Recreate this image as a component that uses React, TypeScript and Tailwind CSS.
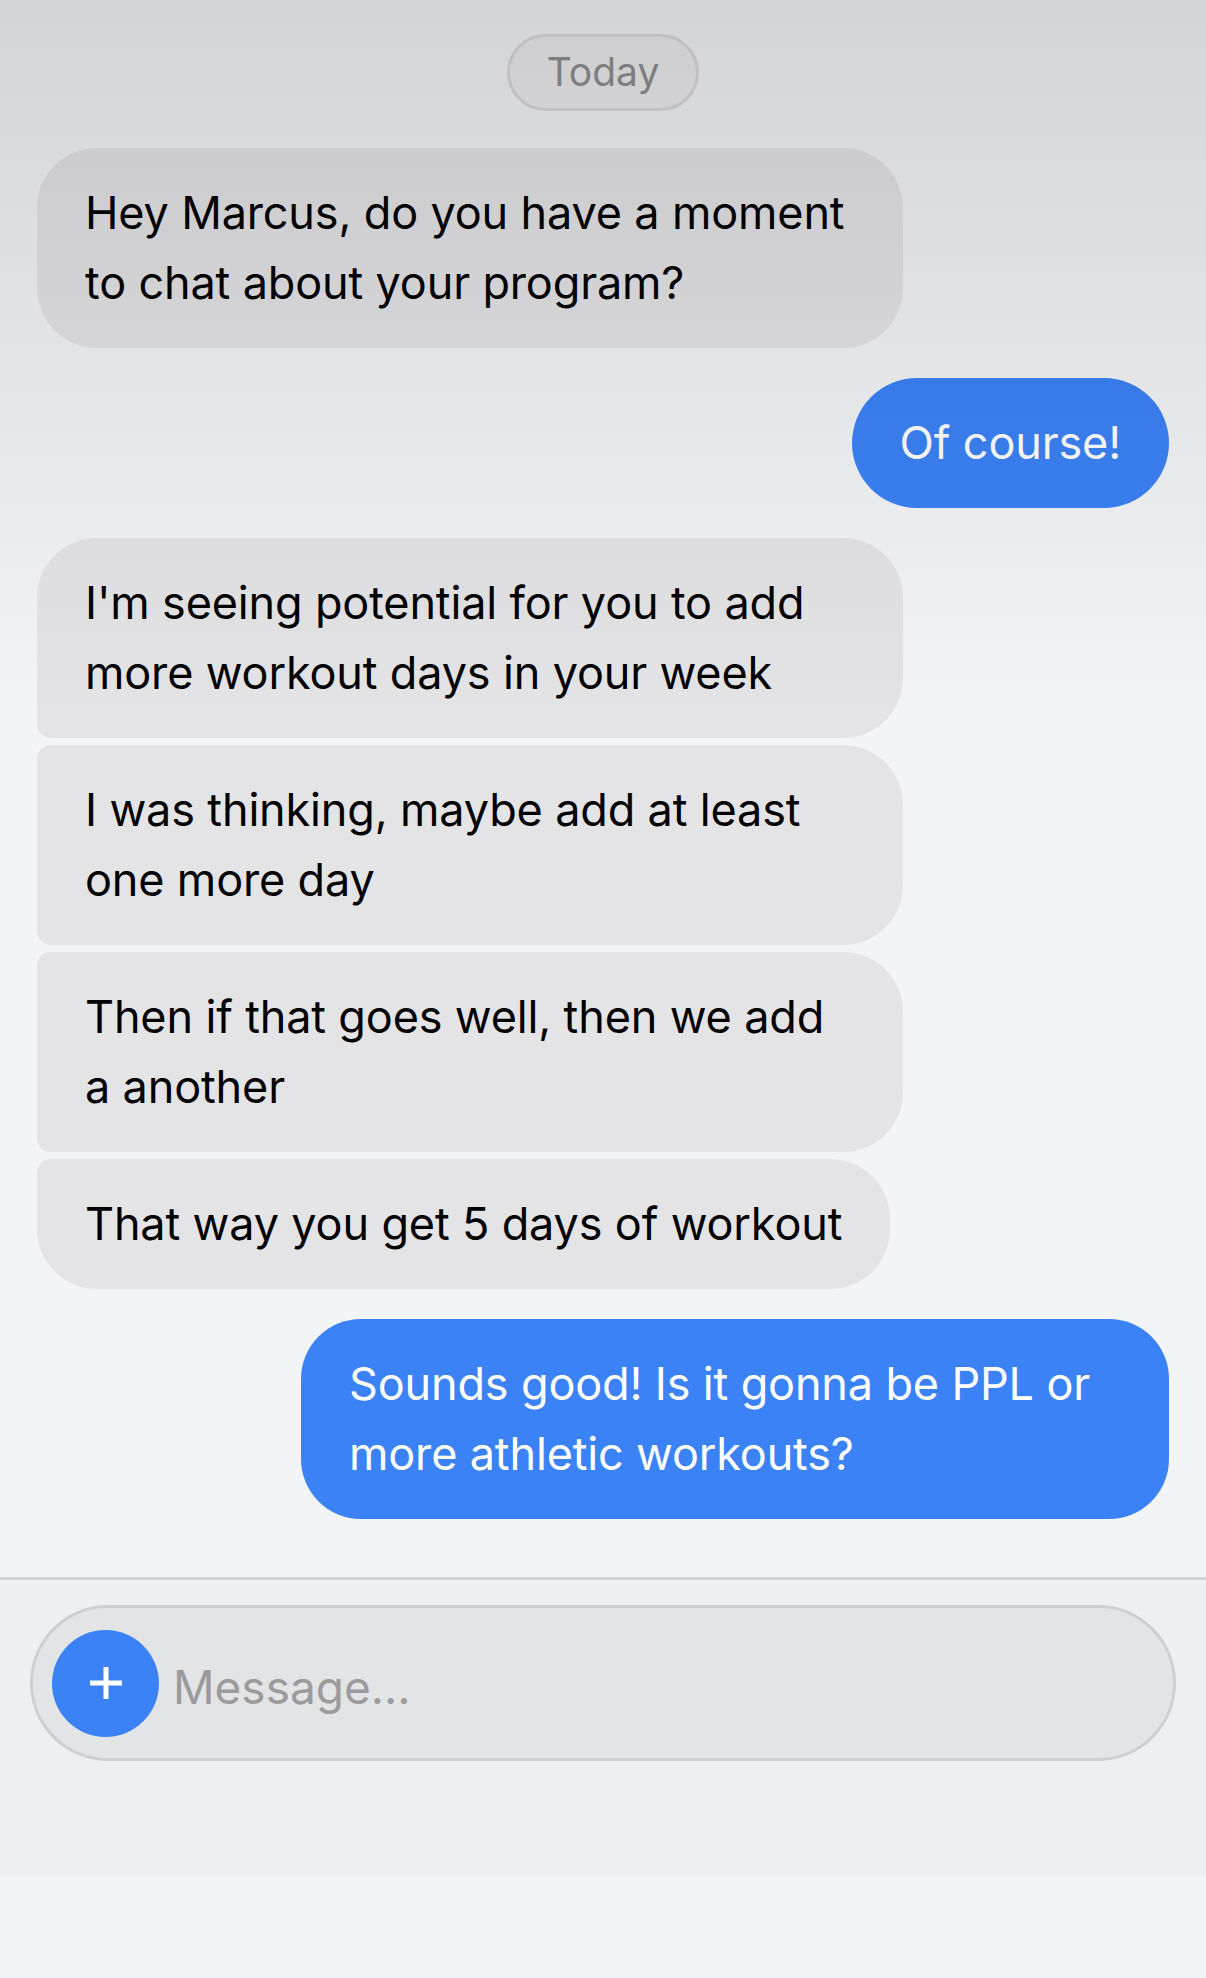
import React from 'react';

type Msg = { id: number; from: 'coach' | 'me'; text: string; shape: string };

const messages: Msg[] = [
  { id: 1, from: 'coach', text: 'Hey Marcus, do you have a moment to chat about your program?', shape: 'rounded-[60px]' },
  { id: 2, from: 'me', text: 'Of course!', shape: 'rounded-[66px]' },
  { id: 3, from: 'coach', text: "I'm seeing potential for you to add more workout days in your week", shape: 'rounded-[60px] rounded-bl-[14px]' },
  { id: 4, from: 'coach', text: 'I was thinking, maybe add at least one more day', shape: 'rounded-[60px] rounded-l-[14px]' },
  { id: 5, from: 'coach', text: 'Then if that goes well, then we add a another', shape: 'rounded-[60px] rounded-l-[14px]' },
  { id: 6, from: 'coach', text: 'That way you get 5 days of workout', shape: 'rounded-[60px] rounded-tl-[14px]' },
  { id: 7, from: 'me', text: 'Sounds good! Is it gonna be PPL or more athletic workouts?', shape: 'rounded-[60px]' },
];

// spacing between bubbles: same sender in a row sits tight, otherwise a wider gap
const gapFor = (i: number) => {
  if (i === 0) return '';
  return messages[i - 1].from === messages[i].from ? 'mt-[7px]' : 'mt-[30px]';
};

const Bubble: React.FC<{ msg: Msg; className: string }> = ({ msg, className }) => {
  const mine = msg.from === 'me';
  return (
    <div className={`flex ${mine ? 'justify-end' : 'justify-start'} ${className}`}>
      <div
        className={`px-[48px] py-[30px] text-[45px] leading-[70px] tracking-[-0.15px] ${msg.shape} ${
          mine ? 'bg-[#3b82f6] text-white max-w-[868px]' : 'bg-[#e4e4e7] text-black max-w-[866px]'
        }`}
      >
        {msg.text}
      </div>
    </div>
  );
};

const App: React.FC = () => {
  return (
    <div className="w-[1206px] h-[1978px] flex flex-col bg-[#f3f4f6] font-[Inter,sans-serif] overflow-hidden">
      <div className="relative h-[1577px] shrink-0 flex flex-col px-[37px] pt-[34px]">
        <div className="flex justify-center">
          <div className="px-[37px] h-[77px] flex items-center rounded-full border-[3px] border-[#d9d9dc] bg-[#ececee] text-[39px] text-[#8e8e93]">
            Today
          </div>
        </div>

        <div className="mt-[37px] flex flex-col">
          {messages.map((m, i) => (
            <Bubble key={m.id} msg={m} className={gapFor(i)} />
          ))}
        </div>

        {/* top shade over the scrolled thread */}
        <div className="pointer-events-none absolute inset-x-0 top-0 h-[720px] bg-linear-to-b from-black/[0.13] to-transparent" />
      </div>

      <div className="h-[298px] shrink-0 border-t-[3px] border-[#d4d4d6] bg-[#eeeff1] px-[30px] pt-[25px]">
        <div className="h-[156px] flex items-center rounded-full border-[3px] border-[#cfcfd2] bg-[#e3e4e6] pl-[19px] pr-[30px]">
          <button className="w-[107px] h-[107px] shrink-0 rounded-full bg-[#3b82f6] flex items-center justify-center">
            <svg width="36" height="36" viewBox="0 0 36 36">
              <path d="M18 2v32M2 18h32" stroke="white" strokeWidth="5" />
            </svg>
          </button>
          <input
            placeholder="Message..."
            className="ml-[14px] pt-[8px] flex-1 bg-transparent outline-none text-[46px] text-black placeholder:text-[#9b9b9e]"
          />
        </div>
      </div>

      <div className="flex-1 bg-[#f3f4f6]" />
    </div>
  );
};

export default App;
